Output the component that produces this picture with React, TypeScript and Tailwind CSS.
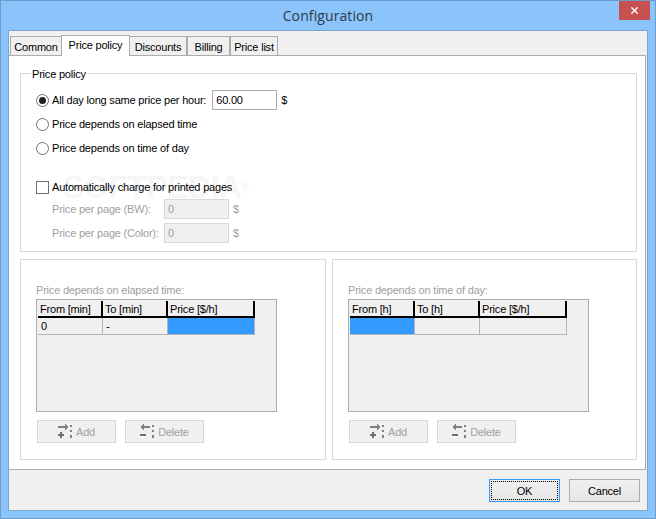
import { X } from 'lucide-react';

const ui = "font-['Liberation_Sans',Arial,sans-serif] text-[11px] leading-[14px] tracking-[-0.2px]";

const tabs = [
  { label: 'Common', w: 'w-[52px]' },
  { label: 'Price policy', w: 'w-[69px]', active: true },
  { label: 'Discounts', w: 'w-[58px]' },
  { label: 'Billing', w: 'w-[43px]' },
  { label: 'Price list', w: 'w-[48px]' },
];

function Tab({ label, w, active }: { label: string; w: string; active?: boolean }) {
  if (active) {
    return (
      <div className={`${w} h-[21px] -ml-px -mr-px z-10 -mb-px pb-[2px] bg-white border border-b-0 border-[#acacac] flex items-center justify-center text-black`}>
        {label}
      </div>
    );
  }
  return (
    <div className={`${w} h-[19px] pt-[1px] bg-[#f0f0f0] border border-b-0 border-[#acacac] flex items-center justify-center text-black`}>
      {label}
    </div>
  );
}

function Radio({ checked, label }: { checked?: boolean; label: string }) {
  return (
    <div className="flex items-center h-[20px]">
      <div className="w-[13px] h-[13px] rounded-full border border-[#707070] bg-white flex items-center justify-center">
        {checked && <div className="w-[7px] h-[7px] rounded-full bg-[#222]" />}
      </div>
      <span className="ml-[3px] text-black">{label}</span>
    </div>
  );
}

function PageRow({ label }: { label: string }) {
  return (
    <div className="flex items-center h-[20px] pl-[16px] text-[#a0a0a0]">
      <span className="w-[112px] whitespace-nowrap">{label}</span>
      <div className="w-[65px] h-[20px] bg-[#f0f0f0] border border-[#d9d9d9] pl-[3px] flex items-center">0</div>
      <span className="ml-[4px]">$</span>
    </div>
  );
}

function AddIcon() {
  return (
    <svg width="15" height="15" viewBox="0 0 15 15" className="shrink-0" shapeRendering="crispEdges">
      <path d="M0 2h9v2H0zM7 0h1v6H7zM8 1h1v4H8zM9 2h1v2H9z" fill="#808080" />
      <path d="M0 10h6v2H0zM2 8h2v6H2z" fill="#707070" />
      <path d="M12 1h2v2h-2zM12 6h2v2h-2zM12 11h2v3h-2z" fill="#808080" />
    </svg>
  );
}

function DeleteIcon() {
  return (
    <svg width="15" height="15" viewBox="0 0 15 15" className="shrink-0" shapeRendering="crispEdges">
      <path d="M2 2h8v2H2zM3 0h1v6H3zM2 1h1v4H2zM1 2h1v2H1z" fill="#808080" />
      <path d="M0 10h6v2H0z" fill="#707070" />
      <path d="M0 12h6v1H0z" fill="#ffffff" />
      <path d="M12 1h2v2h-2zM12 6h2v2h-2zM12 11h2v3h-2z" fill="#808080" />
    </svg>
  );
}

function GridPanel({
  title,
  cols,
  cells,
  selected,
  wide,
}: {
  title: string;
  cols: string[];
  cells: string[];
  selected: number;
  wide?: boolean;
}) {
  return (
    <div className={`${wide ? 'w-[306px]' : 'w-[305px]'} h-[201px] border border-[#d9d9d9] pt-[23px] pl-[15px]`}>
      <div className="h-[16px] text-[#a0a0a0]">{title}</div>
      <div className="w-[241px] h-[113px] border border-[#abadb3] bg-[#f0f0f0] pt-[1px] pl-[1px]">
        <div className="flex">
          {cols.map((c, i) => (
            <div
              key={c}
              className={`${i === 2 ? 'w-[87px]' : 'w-[65px]'} h-[17px] pl-[2px] pt-[2px] border-r-2 border-b-2 border-black text-black leading-[13px]`}
            >
              {c}
            </div>
          ))}
        </div>
        <div className="flex">
          {cells.map((c, i) => (
            <div
              key={i}
              className={`${i === 2 ? 'w-[87px]' : 'w-[65px]'} h-[17px] pl-[3px] pt-[2px] border-b border-r border-[#b4b4b4] text-black leading-[13px] ${i === selected ? 'bg-[#3399ff]' : ''}`}
            >
              {c}
            </div>
          ))}
        </div>
      </div>
      <div className="flex gap-[9px] mt-[8px] ml-[1px]">
        <div className="w-[79px] h-[23px] bg-[#f0f0f0] border border-[#d9d9d9] flex items-center justify-center gap-[3px] text-[#a0a0a0]">
          <AddIcon />
          <span>Add</span>
        </div>
        <div className="w-[79px] h-[23px] bg-[#f0f0f0] border border-[#d9d9d9] flex items-center justify-center gap-[3px] text-[#a0a0a0]">
          <DeleteIcon />
          <span>Delete</span>
        </div>
      </div>
    </div>
  );
}

export default function App() {
  return (
    <div className={`${ui} relative w-[656px] h-[519px] bg-[#8ac4fb] border border-[#6d9dcc] flex flex-col px-[7px] pb-[7px] overflow-hidden`}>
      {/* Title bar */}
      <div className="relative h-[29px] flex items-center justify-center shrink-0">
        <span className="font-['Open_Sans',sans-serif] text-[14px] tracking-[0.1px] text-[#2f3a44]">Configuration</span>
        <div className="absolute right-[-2px] top-0 w-[31px] h-[19px] bg-[#c75050] flex items-center justify-center">
          <X size={11} strokeWidth={3} className="text-white" />
        </div>
      </div>

      {/* Client area */}
      <div className="flex-1 flex flex-col bg-[#f0f0f0] border border-[#7aa6d0] min-h-0">
        <div className="flex items-end h-[24px] pl-[1px] shrink-0">
          {tabs.map((t) => (
            <Tab key={t.label} {...t} />
          ))}
        </div>

        <div className="relative h-[415px] bg-white border border-l-0 border-[#acacac] mr-[1px] pl-[11px] pt-[17px] shrink-0">
          {/* Price policy group */}
          <div className="relative w-[617px] h-[179px] border border-[#d9d9d9] pl-[15px] pt-[16px]">
            <span className="absolute left-[10px] -top-[7px] bg-white px-[1px] text-black">Price policy</span>
            <span className="absolute left-[42px] top-[96px] font-bold text-[32px] leading-[34px] tracking-[-0.5px] text-[#f6f6f6] whitespace-nowrap">
              SOFTPEDIA<span className="text-[10px] align-top">®</span>
            </span>
            <div className="flex items-center h-[20px]">
              <Radio checked label="All day long same price per hour:" />
              <div className="ml-[6px] w-[65px] h-[20px] border border-[#abadb3] pl-[3px] flex items-center text-black">60.00</div>
              <span className="ml-[4px] text-black">$</span>
            </div>
            <div className="mt-[4px]"><Radio label="Price depends on elapsed time" /></div>
            <div className="mt-[4px]"><Radio label="Price depends on time of day" /></div>
            <div className="relative flex items-center h-[14px] mt-[22px]">
              <div className="w-[13px] h-[13px] border border-[#707070] bg-white" />
              <span className="ml-[3px] text-black">Automatically charge for printed pages</span>
            </div>
            <div className="relative mt-[5px] flex flex-col gap-[4px]">
              <PageRow label="Price per page (BW):" />
              <PageRow label="Price per page (Color):" />
            </div>
          </div>

          {/* Lower groups */}
          <div className="flex gap-[6px] mt-[7px]">
            <GridPanel
              title="Price depends on elapsed time:"
              cols={['From [min]', 'To [min]', 'Price [$/h]']}
              cells={['0', '-', '']}
              selected={2}
              wide
            />
            <GridPanel
              title="Price depends on time of day:"
              cols={['From [h]', 'To [h]', 'Price [$/h]']}
              cells={['', '', '']}
              selected={0}
            />
          </div>
        </div>

        {/* Footer buttons */}
        <div className="flex justify-end gap-[9px] pt-[9px] pr-[7px]">
          <div className="w-[71px] h-[23px] border border-[#3399ff] bg-gradient-to-b from-[#f0f0f0] to-[#e5e5e5] p-[1px]">
            <div className="w-full h-full border border-dotted border-black flex items-center justify-center text-black">OK</div>
          </div>
          <div className="w-[71px] h-[23px] border border-[#acacac] bg-gradient-to-b from-[#f0f0f0] to-[#e5e5e5] flex items-center justify-center text-black">
            Cancel
          </div>
        </div>
      </div>
    </div>
  );
}
